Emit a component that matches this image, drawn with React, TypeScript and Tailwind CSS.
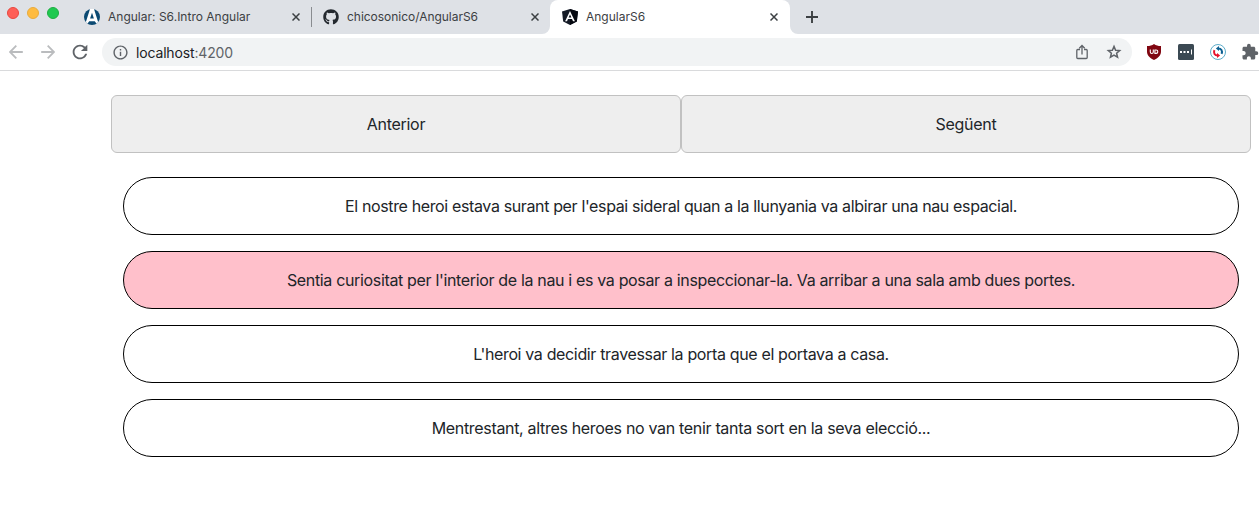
import { FaGithub } from "react-icons/fa";
import { MdExtension, MdInfoOutline, MdRefresh } from "react-icons/md";

function CampusLogo() {
  return (
    <svg viewBox="0 0 16 16" className="size-4 shrink-0">
      <circle cx="8" cy="8" r="8" fill="#0b4a73" />
      <path d="M6 0h4l4.200 13.200-1.800 1.400-1.600-2.400H5.200l-1.600 2.400-1.800-1.400z" fill="#fff" />
      <path d="M8 3.800 9.900 9.400H6.100z" fill="#0b4a73" />
    </svg>
  );
}

function AngularLogo() {
  return (
    <svg viewBox="0 0 16 16" className="size-4 shrink-0">
      <path d="M8 0 0 2.600l1.200 10L8 16l6.800-3.400L16 2.600z" fill="#141a26" />
      <path d="M8 0v16l6.800-3.400L16 2.600z" fill="#050810" />
      <path
        d="M8 1.900 3.100 12.300h1.900l1-2.300h4l1 2.300h1.900zm0 3.600 1.400 3H6.600z"
        fill="#fff"
        fillRule="evenodd"
      />
    </svg>
  );
}

function Close() {
  return (
    <svg viewBox="0 0 8 8" className="ml-auto size-2 shrink-0 text-[#3c4043]">
      <path d="M.5.5l7 7m0-7l-7 7" stroke="currentColor" strokeWidth="1.500" />
    </svg>
  );
}

function ArrowIcon({ className }: { className: string }) {
  return (
    <svg viewBox="0 0 14 14" className={className} fill="none" stroke="currentColor" strokeWidth="1.800">
      <path d="M13.800 7H1.400M7.300.7 1 7l6.300 6.300" />
    </svg>
  );
}

function ShareIcon() {
  return (
    <svg
      viewBox="0 0 12 16"
      className="ml-auto h-4 w-3 shrink-0"
      fill="none"
      stroke="currentColor"
      strokeWidth="1.300"
    >
      <path d="M4 5.500H1.800a1 1 0 0 0-1 1v7a1 1 0 0 0 1 1h8.400a1 1 0 0 0 1-1v-7a1 1 0 0 0-1-1H8M6 10.500V1.500M3.300 4.200 6 1.500l2.700 2.700" />
    </svg>
  );
}

function StarIcon() {
  return (
    <svg
      viewBox="0 0 16 16"
      className="ml-[18px] size-4 shrink-0"
      fill="none"
      stroke="currentColor"
      strokeWidth="1.500"
    >
      <path d="M8 2.400 9.600 6.200l4.100.35-3.100 2.700.95 4L8 11.100l-3.550 2.150.95-4-3.100-2.700 4.100-.35z" />
    </svg>
  );
}

function ShieldIcon() {
  return (
    <svg viewBox="0 0 14 16" className="h-4 w-3.5 shrink-0">
      <path
        d="M7 0C5 1.400 3 2 0 2v5.500c0 4 3 6.500 7 8.500 4-2 7-4.500 7-8.500V2C11 2 9 1.400 7 0z"
        fill="#800610"
      />
      <path
        d="M3.300 5.500v2.600q0 1.400 1.500 1.400t1.500-1.400V5.500M7.900 6h1.200q1.700 0 1.700 1.700T9.100 9.400H7.900z"
        fill="none"
        stroke="#fff"
        strokeWidth="1.100"
      />
    </svg>
  );
}

function PasswordIcon() {
  return (
    <svg viewBox="0 0 16 16" className="size-4 shrink-0">
      <rect width="16" height="16" rx="1.500" fill="#3b4953" />
      <path d="M2 7h2v2H2zM5.500 7h2v2h-2zM9 7h2v2H9zM13 5.500h1v5h-1z" fill="#fff" />
    </svg>
  );
}

function SyncIcon() {
  return (
    <svg viewBox="0 0 16 16" className="size-4 shrink-0">
      <circle cx="8" cy="8" r="7.500" fill="#fff" stroke="#4ba3c3" strokeWidth="0.900" />
      <path d="M8.300 4.500c3 0 4.400 2.300 3.300 5.300" fill="none" stroke="#0c5f91" strokeWidth="2" />
      <path d="M9 2v5L5.900 4.500z" fill="#0c5f91" />
      <path d="M7.700 11.500C4.700 11.500 3.300 9.200 4.400 6.200" fill="none" stroke="#e6122d" strokeWidth="2" />
      <path d="M7 14V9l3.100 2.500z" fill="#e6122d" />
    </svg>
  );
}

function TabCorner({ side }: { side: "left" | "right" }) {
  return (
    <svg
      viewBox="0 0 8 8"
      className={
        side === "left"
          ? "absolute bottom-0 -left-2 size-2"
          : "absolute -right-2 bottom-0 size-2 -scale-x-100"
      }
    >
      <path d="M8 0v8H0a8 8 0 0 0 8-8z" fill="#fff" />
    </svg>
  );
}

function TabBar() {
  return (
    <div className="flex h-[34px] bg-[#dee1e6] text-[12px] text-[#3c4043]">
      <div className="flex w-[72px] shrink-0 gap-2 pt-[7px] pl-[7px]">
        <span className="size-3 rounded-full border border-[#e9473f] bg-[#fe5f57]" />
        <span className="size-3 rounded-full border border-[#e9ab3c] bg-[#febb40]" />
        <span className="size-3 rounded-full border border-[#1eae42] bg-[#1fc950]" />
      </div>
      <div className="flex w-[239px] items-center pr-[11px] pl-3">
        <CampusLogo />
        <span className="ml-2 whitespace-nowrap tracking-[0.01px]">Angular: S6.Intro Angular</span>
        <Close />
      </div>
      <div className="mt-[7px] h-5 w-px bg-[#898c90]" />
      <div className="flex w-[238px] items-center pr-[11px] pl-[11px]">
        <FaGithub className="size-4 shrink-0 text-[#24292f]" />
        <span className="ml-2 whitespace-nowrap tracking-[-0.03px]">chicosonico/AngularS6</span>
        <Close />
      </div>
      <div className="relative flex w-60 items-center rounded-t-lg bg-white pr-3 pl-3">
        <TabCorner side="left" />
        <AngularLogo />
        <span className="ml-2 whitespace-nowrap">AngularS6</span>
        <Close />
        <TabCorner side="right" />
      </div>
      <div className="flex items-center pl-4">
        <svg viewBox="0 0 12 12" className="size-3 text-[#3c4043]">
          <path d="M6 0v12M0 6h12" stroke="currentColor" strokeWidth="1.900" />
        </svg>
      </div>
    </div>
  );
}

function Toolbar() {
  return (
    <div className="flex h-[37px] items-center border-b border-[#d9dadc] bg-white pl-[9px] text-[#5f6368]">
      <ArrowIcon className="size-3.5 shrink-0 text-[#babcbe]" />
      <ArrowIcon className="ml-[18px] size-3.5 shrink-0 -scale-x-100 text-[#babcbe]" />
      <MdRefresh className="ml-[14px] size-[22px] shrink-0" />
      <div className="ml-[11px] flex h-7 w-[1030px] shrink-0 items-center rounded-full bg-[#f1f3f4] pr-2.5 pl-2.5">
        <MdInfoOutline className="size-[17px]" />
        <span className="ml-[7px] text-[14px] tracking-[-0.16px]">
          <span className="text-[#202124]">localhost</span>:4200
        </span>
        <ShareIcon />
        <StarIcon />
      </div>
      <div className="ml-[15px] flex shrink-0 items-center">
        <ShieldIcon />
        <div className="ml-[17px] flex gap-4">
          <PasswordIcon />
          <SyncIcon />
        </div>
        <MdExtension className="ml-[15px] size-[18px]" />
      </div>
    </div>
  );
}

const lines = [
  {
    text: "El nostre heroi estava surant per l'espai sideral quan a la llunyania va albirar una nau espacial.",
    tracking: "tracking-[-0.365px]",
  },
  {
    text: "Sentia curiositat per l'interior de la nau i es va posar a inspeccionar-la. Va arribar a una sala amb dues portes.",
    tracking: "tracking-[-0.34px]",
  },
  {
    text: "L'heroi va decidir travessar la porta que el portava a casa.",
    tracking: "tracking-[-0.35px]",
  },
  {
    text: "Mentrestant, altres heroes no van tenir tanta sort en la seva elecció...",
    tracking: "tracking-[-0.32px]",
  },
];

export default function App() {
  const current = 1;
  return (
    <div className="h-[521px] w-[1259px] overflow-hidden bg-white font-['Inter',sans-serif]">
      <TabBar />
      <Toolbar />
      <main className="pt-6 pr-2 pl-[111px] text-[16px] tracking-[-0.3px] text-[#212529]">
        <div className="grid grid-cols-2">
          <button className="h-[58px] rounded-md border border-[#c1c1c1] bg-[#eee]">Anterior</button>
          <button className="h-[58px] rounded-md border border-[#c1c1c1] bg-[#eee]">Següent</button>
        </div>
        <div className="mt-6 flex flex-col gap-4 px-3">
          {lines.map((line, i) => (
            <div
              key={line.text}
              className={
                i === current
                  ? "flex h-[58px] items-center justify-center rounded-full border border-black bg-[#ffc0cb]"
                  : "flex h-[58px] items-center justify-center rounded-full border border-black bg-white"
              }
            >
              <p className={line.tracking}>{line.text}</p>
            </div>
          ))}
        </div>
      </main>
    </div>
  );
}
